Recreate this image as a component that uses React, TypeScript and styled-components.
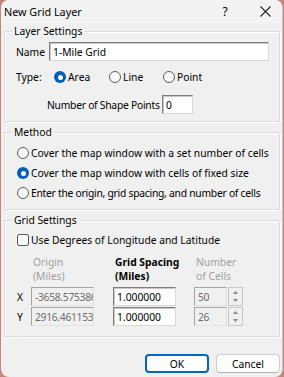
import React from "react";
import styled, { createGlobalStyle } from "styled-components";

const Global = createGlobalStyle`
  html, body { margin: 0; padding: 0; background: #c4857c; }
  body { width: 284px; height: 377px; overflow: hidden; font-family: "Noto Sans", sans-serif; font-size: 10.3px; line-height: 16px; color: #000; }
  * { box-sizing: border-box; }
`;

const Window = styled.div`
  margin-left: 1px;
  width: 282px;
  height: 377px;
  background: #f0f0f0;
  border-radius: 8px;
  border-right: 1px solid #c9c9c9;
  overflow: hidden;
  display: flex;
  flex-direction: column;
`;

const TitleBar = styled.div`
  height: 23px;
  flex: none;
  background: #f3f3f3;
  display: flex;
  align-items: center;
  padding-left: 3px;
  font-size: 10.8px;
`;

const Title = styled.div`
  flex: 1;
`;

const TitleButton = styled.div<{ $w: number }>`
  width: ${(p) => p.$w}px;
  display: flex;
  align-items: center;
  justify-content: center;
  font-size: 12px;
`;

const Body = styled.div`
  flex: 1;
  display: flex;
  flex-direction: column;
  padding: 1px 2px 0 3px;
`;

const Group = styled.fieldset<{ $h: number; $mt: number }>`
  margin: ${(p) => p.$mt}px 0 0 0;
  height: ${(p) => p.$h}px;
  border: 1px solid #dcdcdc;
  box-shadow: inset 1px 1px 0 #fff, 1px 1px 0 #fff;
  border-radius: 0;
  padding: 0 10px 0 10px;
  min-width: 0;
`;

const Legend = styled.legend`
  padding: 0 2px;
  margin-left: -3px;
  line-height: 14px;
  height: 14px;
`;

const Row = styled.div<{ $mt: number; $pl?: number }>`
  display: flex;
  align-items: center;
  height: 16px;
  margin-top: ${(p) => p.$mt}px;
  padding-left: ${(p) => p.$pl ?? 0}px;
  white-space: nowrap;
`;

const TightText = styled.span`
  letter-spacing: -0.25px;
`;

const FieldRow = styled(Row)`
  height: 19px;
`;

const HeaderRow = styled(Row)`
  height: 28px;
  align-items: flex-start;
`;

const Label = styled.span<{ $w?: number; $tight?: boolean }>`
  ${(p) => (p.$w ? `width: ${p.$w}px;` : "")}
  letter-spacing: ${(p) => (p.$tight ? "-0.25px" : "0")};
  flex: none;
`;

const Input = styled.div<{ $w: number; $disabled?: boolean }>`
  width: ${(p) => p.$w}px;
  height: 19px;
  background: ${(p) => (p.$disabled ? "#f0f0f0" : "#fff")};
  color: ${(p) => (p.$disabled ? "#6d6d6d" : "#000")};
  border: 1px solid;
  border-color: ${(p) =>
    p.$disabled ? "#a5a5a5 #e3e3e3 #e3e3e3 #a5a5a5" : "#7f7f7f #d9d9d9 #d9d9d9 #7f7f7f"};
  box-shadow: ${(p) => (p.$disabled ? "none" : "inset 1px 1px 0 #c8c8c8")};
  padding-left: 3px;
  letter-spacing: ${(p) => (p.$disabled ? "-0.3px" : "0")};
  display: flex;
  align-items: center;
  overflow: hidden;
  white-space: nowrap;
  flex: none;
`;

const RadioItem = styled.div<{ $w?: number }>`
  display: flex;
  align-items: center;
  ${(p) => (p.$w ? `width: ${p.$w}px;` : "")}
  flex: none;
`;

const RadioCircle = styled.span<{ $on?: boolean }>`
  width: 12px;
  height: 12px;
  border-radius: 50%;
  flex: none;
  margin-right: 2px;
  background: ${(p) => (p.$on ? "#005fb8" : "#f9f9f9")};
  border: ${(p) => (p.$on ? "none" : "1px solid #5c5c5c")};
  display: flex;
  align-items: center;
  justify-content: center;
  &::after {
    content: "";
    display: ${(p) => (p.$on ? "block" : "none")};
    width: 5px;
    height: 5px;
    border-radius: 50%;
    background: #fff;
  }
`;

const Check = styled.span`
  width: 12px;
  height: 12px;
  border: 1px solid #5c5c5c;
  border-radius: 2px;
  background: #f9f9f9;
  margin-right: 2px;
  flex: none;
`;

const Header = styled.div<{ $w: number; $bold?: boolean; $disabled?: boolean }>`
  width: ${(p) => p.$w}px;
  flex: none;
  line-height: 14px;
  font-weight: ${(p) => (p.$bold ? 700 : 400)};
  color: ${(p) => (p.$disabled ? "#a0a0a0" : "#000")};
`;

const Spin = styled.div`
  width: 15px;
  height: 19px;
  border: 1px solid #c8c8c8;
  background: #f0f0f0;
  display: flex;
  flex-direction: column;
  flex: none;
  margin-left: 1px;
`;

const SpinHalf = styled.div`
  flex: 1;
  display: flex;
  align-items: center;
  justify-content: center;
`;

const Arrow = ({ up }: { up?: boolean }) => (
  <svg width="5" height="3" viewBox="0 0 5 3">
    <path d={up ? "M0 3 L2.5 0 L5 3 Z" : "M0 0 L2.5 3 L5 0 Z"} fill="#888" />
  </svg>
);

const Footer = styled.div`
  display: flex;
  justify-content: flex-end;
  gap: 7px;
  margin-top: 17px;
`;

const Button = styled.div<{ $default?: boolean }>`
  width: 64px;
  height: 19px;
  background: #fdfdfd;
  border: ${(p) => (p.$default ? "2px solid #0067c0" : "1px solid #cfcfcf")};
  border-bottom-color: ${(p) => (p.$default ? "#0067c0" : "#b5b5b5")};
  border-radius: 4px;
  display: flex;
  align-items: center;
  justify-content: center;
`;

export default function App() {
  return (
    <>
      <Global />
      <Window>
        <TitleBar>
          <Title>New Grid Layer</Title>
          <TitleButton $w={46}>?</TitleButton>
          <TitleButton $w={34}>
            <svg width="11" height="11" viewBox="0 0 11 11">
              <path d="M0.5 0.5 L10.5 10.5 M10.5 0.5 L0.5 10.5" stroke="#222" strokeWidth="1.1" />
            </svg>
          </TitleButton>
        </TitleBar>
        <Body>
          <Group $h={98} $mt={0}>
            <Legend>Layer Settings</Legend>
            <FieldRow $mt={4} $pl={1}>
              <Label $w={33}>Name</Label>
              <Input $w={220}>1-Mile Grid</Input>
            </FieldRow>
            <Row $mt={8} $pl={1}>
              <Label $w={38}>Type:</Label>
              <RadioItem $w={55}>
                <RadioCircle $on />Area
              </RadioItem>
              <RadioItem $w={54}>
                <RadioCircle />Line
              </RadioItem>
              <RadioItem>
                <RadioCircle />Point
              </RadioItem>
            </Row>
            <FieldRow $mt={10} $pl={32}>
              <Label $w={115} $tight>Number of Shape Points</Label>
              <Input $w={31}>0</Input>
            </FieldRow>
          </Group>
          <Group $h={85} $mt={3}>
            <Legend>Method</Legend>
            <Row $mt={6} $pl={2}>
              <RadioItem>
                <RadioCircle />Cover the map window with a set number of cells
              </RadioItem>
            </Row>
            <Row $mt={4} $pl={2}>
              <RadioItem>
                <RadioCircle $on />Cover the map window with cells of fixed size
              </RadioItem>
            </Row>
            <Row $mt={4} $pl={2}>
              <RadioItem>
                <RadioCircle />
                <TightText>Enter the origin, grid spacing, and number of cells</TightText>
              </RadioItem>
            </Row>
          </Group>
          <Group $h={124} $mt={3}>
            <Legend>Grid Settings</Legend>
            <Row $mt={5} $pl={2}>
              <Check />
              Use Degrees of Longitude and Latitude
            </Row>
            <HeaderRow $mt={7} $pl={18}>
              <Header $w={82} $disabled>
                Origin
                <br />
                (Miles)
              </Header>
              <Header $w={81} $bold>
                Grid Spacing
                <br />
                (Miles)
              </Header>
              <Header $w={60} $disabled>
                Number
                <br />
                of Cells
              </Header>
            </HeaderRow>
            <FieldRow $mt={4} $pl={2}>
              <Label $w={14}>X</Label>
              <Input $w={63} $disabled>-3658.575386</Input>
              <Label $w={19} />
              <Input $w={63}>1.000000</Input>
              <Label $w={18} />
              <Input $w={33} $disabled>50</Input>
              <Spin>
                <SpinHalf><Arrow up /></SpinHalf>
                <SpinHalf><Arrow /></SpinHalf>
              </Spin>
            </FieldRow>
            <FieldRow $mt={1} $pl={2}>
              <Label $w={14}>Y</Label>
              <Input $w={63} $disabled>2916.461153</Input>
              <Label $w={19} />
              <Input $w={63}>1.000000</Input>
              <Label $w={18} />
              <Input $w={33} $disabled>26</Input>
              <Spin>
                <SpinHalf><Arrow up /></SpinHalf>
                <SpinHalf><Arrow /></SpinHalf>
              </Spin>
            </FieldRow>
          </Group>
          <Footer>
            <Button $default>OK</Button>
            <Button>Cancel</Button>
          </Footer>
        </Body>
      </Window>
    </>
  );
}
